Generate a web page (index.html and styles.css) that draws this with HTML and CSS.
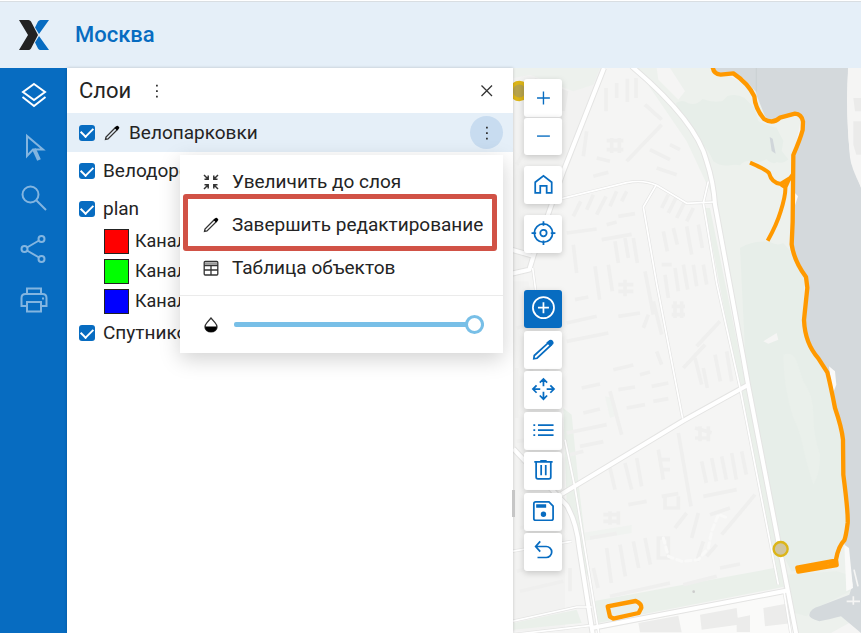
FILE: index.html
```html
<!DOCTYPE html>
<html lang="ru">
<head>
<meta charset="utf-8">
<meta name="viewport" content="width=device-width, initial-scale=1">
<title>Москва</title>
<link rel="stylesheet" href="styles.css">
</head>
<body>
<header class="topbar">
  <svg class="logo" viewBox="0 0 30 30" aria-hidden="true">
    <path fill="#222" d="M0 0h9.500q1.500 0 2.500 1.500L19 15l-7 13.500Q11 30 9.500 30H0l9-15z"/>
    <path fill="#076cc1" d="M30 0h-8.500q-1.500 0-2.500 1.500L16 7.500l4 6.500zM30 30h-8.500q-1.500 0-2.500-1.500L16 22.500l4-6.500z"/>
  </svg>
  <h1 class="title">Москва</h1>
</header>
<div class="workspace">
  <nav class="rail" aria-label="Инструменты">
    <button class="rail-btn active" aria-label="Слои"><svg viewBox="0 0 28 28"><path d="M14 2l11 8-11 8-11-8zM2.500 15L14 24l11.500-9"/></svg></button>
    <button class="rail-btn" aria-label="Выбор"><svg viewBox="0 0 28 28"><path d="M7 3v20l6-6.500h10z"/><path class="thick" d="M14 16l5 11"/></svg></button>
    <button class="rail-btn" aria-label="Поиск"><svg viewBox="0 0 28 28"><circle cx="10.500" cy="10.500" r="8"/><path d="M16.500 16.500L26 26"/></svg></button>
    <button class="rail-btn" aria-label="Поделиться"><svg viewBox="0 0 28 28"><circle cx="4.500" cy="14" r="3"/><circle cx="21.500" cy="4" r="3"/><circle cx="21.500" cy="24" r="3"/><path d="M7 12.500l12-7M7 15.500l12 7"/></svg></button>
    <button class="rail-btn" aria-label="Печать"><svg viewBox="0 0 28 28"><path d="M7 8V2.500h14V8M7 20H1.500v-8q0-4 4-4h17q4 0 4 4v8H21M7 16h14v9.500H7z"/><path d="M22 12.500h2"/></svg></button>
  </nav>
  <section class="panel">
    <div class="panel-head">
      <h2>Слои</h2>
      <button class="icon-btn" aria-label="Меню слоёв"><svg viewBox="0 0 20 20"><path class="dots" d="M9 3.700h1.800v1.800H9zM9 9.200h1.800v1.800H9zM9 14.700h1.800v1.800H9z"/></svg></button>
      <button class="icon-btn close" aria-label="Закрыть"><svg viewBox="0 0 20 20"><path class="line" d="M4.500 4.500l10.500 10.500M15 4.500L4.500 15"/></svg></button>
    </div>
    <ul class="layers">
      <li class="layer selected">
        <label><input type="checkbox" checked><svg class="pen" viewBox="0 0 16 16"><path class="line" d="M1.500 14.500l.500-2.500L11.500 2.500l2 2L4 14z"/><path d="M10.500 3l2-2q.800-.700 1.500 0l1 1q.700.700 0 1.500l-2 2z"/></svg>Велопарковки</label>
        <button class="more" aria-label="Действия" aria-expanded="true"><svg viewBox="0 0 20 20"><path class="dots" d="M9 3.700h1.800v1.800H9zM9 9.200h1.800v1.800H9zM9 14.700h1.800v1.800H9z"/></svg></button>
        <div class="menu">
          <button class="item"><svg viewBox="0 0 16 16"><path class="bold" d="M1 1l4 4M5.200 1.500v3.700H1.500M15 1l-4 4M10.800 1.500v3.700h3.700M1 15l4-4M5.200 14.500v-3.700H1.500M15 15l-4-4M10.800 14.500v-3.700h3.700"/></svg>Увеличить до слоя</button>
          <button class="item marked"><svg viewBox="0 0 16 16"><path class="line" d="M1.500 14.500l.500-2.500L11.500 2.500l2 2L4 14z"/><path d="M10.500 3l2-2q.800-.700 1.500 0l1 1q.700.700 0 1.500l-2 2z"/></svg>Завершить редактирование</button>
          <button class="item"><svg viewBox="0 0 16 16"><rect class="line" x="1.200" y="1.500" width="13.600" height="13.500" rx="1"/><path class="line" d="M1 5.500h14M1 10h14M8 5.500V15"/><path fill="#999" d="M2 2.500h12v2.300H2z"/></svg>Таблица объектов</button>
          <div class="opacity">
            <svg viewBox="0 0 16 16"><path class="line" d="M8 1L4 5.600q-2 2.300-2 4.300a6 5 0 0 0 12 0q0-2-2-4.300z"/><path d="M2 9.500h12a6 5.500 0 0 1-12 0z"/></svg>
            <input type="range" min="0" max="100" value="100" aria-label="Непрозрачность">
          </div>
        </div>
      </li>
      <li class="layer"><label><input type="checkbox" checked>Велодорожки</label></li>
      <li class="layer"><label><input type="checkbox" checked>plan</label></li>
      <li>
        <ul class="legend">
          <li><span class="swatch red"></span>Канал 1</li>
          <li><span class="swatch green"></span>Канал 2</li>
          <li><span class="swatch blue"></span>Канал 3</li>
        </ul>
      </li>
      <li class="layer"><label><input type="checkbox" checked>Спутниковый снимок</label></li>
    </ul>
    <span class="grip"></span>
  </section>
  <main class="map">
    <svg class="canvas" viewBox="9 0 1044 1695" preserveAspectRatio="xMinYMin slice" aria-hidden="true">
      <path fill="#f5f5f4" d="M0 0h1100v1700H0z"/>
      <path fill="#f2f2f1" d="M0 0h275L60 600 0 620zM0 640h55l110 460v590H0z"/>
      <!-- parks -->
      <path fill="#edf1ed" d="M10 0h260l-20 50-60 20L60 20 10 30zM380 0h230l120 60 50 100 95-20-25 130-5 280 40 90-8 120 40 90 70 130 40 430-20 120 30 70-10 60-110 60-20 25 20 30 75-10 40 50H865L700 870 610 390 530 220z"/>
      <path fill="#e7eee9" d="M498 105q20-12 35 0 25 10 45-12 30 12 60 6l15-15q25-8 50 5l30 30 12 40q30 15 55 20l20 40-5 30 20 25q-15 15-35 8-10 10-30-8-20 10-35 8-30-10-45 10-15-4-30 0-30 4-50-12-12-30-35-55-10-30-30-45-15-30-42-58z"/>
      <path fill="#e7eee9" d="M690 540q40-25 90-18 20 12 40 4 20 20 35 45l30 60-8 130q10 60 45 110l40 60 45 280 10 120-12 90-30 60-130 30-60-120-70-340z"/>
      <path fill="#e9efea" d="M830 1520l150-10 35 10 5 50-110 55-20 20-35-10z"/>
      <path fill="#eaf0eb" d="M820 860q30-10 40 20t20 60q30 40 30 100t20 120q0 60-20 90-20-60-30-110t-30-90q-30-90-30-190z"/>
      <path fill="#f0f3f0" d="M215 1395l150-24 0 24-145 24zM285 985l25 5 15 50-25 10z"/>
      <path fill="#eaf0ea" d="M250 1600l570-105 10 60-565 110zM10 1665l190-40 15 40-205 20zM160 1020l25 20 20 200 35 300-20-40-50-200zM585 420l15 0 85 420 130 660-22 0-125-640z"/>
      <path fill="#f5f5f4" d="M440 0h40l45 70-20 25-60-60zM760 820l40-25 5 20-30 12z"/>
      <!-- river and banks -->
      <path fill="#d4d9dc" d="M605 0H1015Q1005 120 1020 260L1053 360V1695L993 1645Q955 1655 928 1660 895 1650 898 1640 903 1620 928 1615L1018 1580 1028 1550 1008 1460 1003 1420 1013 1370 1000 1116 975 1020 952 910 925 870Q885 830 882 760L892 660 888 628Q852 580 845 530L848 460 850 260 880 180Q875 140 855 138L810 150Q790 170 765 145L741 85V75L700 30 660 14Q610 22 605 0z"/>
      <path fill="#f5f5f4" d="M1014 0h39v358q-30-60-33-90-12-120-6-268z"/>
      <path fill="#ebebea" d="M1030 90h23v40h-18zM1030 160h23v100h-14l-9-30z"/>
      <path fill="#fafaf9" d="M850 370l14 15-10 30zM957 895l18 15 4 40-12 30zM1003 1430l14 10 12 120-20 10z"/>
      <path fill="#fafaf9" d="M245 1690l590-115 20 125H245z"/>
      <path fill="#d0d6da" d="M779 207l9 5 9 45-12-8z"/>
      <path fill="none" stroke="#f5f5f4" stroke-width="5" d="M1010 1600h40M1030 1585v25M1032 1505l12 50"/>
      <path fill="none" stroke="#c5cbce" stroke-width="2" d="M739 0v80"/>
      <!-- buildings -->
      <g fill="none" stroke="#efefee" stroke-width="11">
        <path d="M288 60v70M320 45v45M352 32v70M378 30v60M290 218h50M290 245h50M305 210v45M328 210v45M230 190l-10 75M405 110l50 45M350 280l105-110M420 245l60 30M480 230l30 15M440 300l60 20M250 325l45-12M260 270l40 10"/>
        <path d="M190 445l22-45M230 425l20-45M260 440l28-55M300 415l20-45M335 400l15-30M455 420l20-40M475 435l25-50M500 450l25-50M530 460l20-40"/>
        <path d="M170 495l90-12M275 515l90-16M290 470l30-8M325 445l50-8M190 530l10 85M255 595l14 100M295 590l12 80M315 520l10 65M345 510l10 60M370 510l12 75M325 650h45M325 670h45M345 635v50M405 610l25 130"/>
        <path d="M460 490l12 60M490 480l12 50M530 475l15 85M565 470l12 70M455 590h30M465 620l10 70M495 600l10 70M520 590l13 75M550 590l10 65M580 590l10 60"/>
        <path d="M170 765l90-20M170 820l125-25M195 695l40-8M325 745l65-10M485 715h40M485 740h40M495 700v50M515 700v50M400 780l15-40M560 835l70-75M430 700l25 100"/>
        <path d="M215 960l55-12M220 1035l50-12M310 905l60-14M325 965l50-8M350 1020l55-10M300 970l35 130M390 920l30-8M425 955l50-10M430 1000l45-8M440 850l15 40M520 900l65-70M555 870l20 80M580 900l12 60M615 860l16 80M650 850l15 90"/>
        <path d="M170 1095l120-25M210 1135l70-14M180 1160l40-10M345 1185l20 80M380 1170l15 85M300 1200l15 65M445 1145l15 90M450 1175h30M450 1205h30M555 1080l50 14M555 1110h45M570 1075v45M595 1075v45"/>
        <path d="M505 1095l38 220M575 1180l14 65M605 1170l14 70M635 1165l14 70M665 1155l14 80M695 1150l14 70M580 1285l100-20M355 1310l55-10M455 1285l50-8M465 1285v35h40v-35M280 1340h50M280 1360h50M300 1330v40M325 1330v40M635 1400l100-120"/>
        <path d="M240 1410l80-14M250 1500l14 60M290 1440l14 105M330 1430l16 95M370 1420l16 80M405 1410l16 80M445 1410h30v60h-30zM495 1380l35-45M545 1410l20-75M600 1340l60-20M590 1465l30-35M560 1480l20-60M300 1585l180-40M520 1550l100-25M630 1500l60-12"/>
        <path d="M20 780l90-20M20 900v150M60 880l20 130M110 900v100M20 1120l110-15M30 1180l100-10M30 1380l100-20M20 1510l120-30M30 1570l130-30M180 1500v70M20 290l60-100M55 180l10 70M100 400l20-60"/>
      </g>
      <g fill="#ececeb"><path d="M75 30l100 40-10 60-110-20zM385 1665l120-22 10 50H390zM570 1640l110-20 5 50-110 15zM760 1620l80-15 10 60-85 10zM680 1650l40-8v50h-40z"/></g>
      <path fill="none" stroke="#f9f9f8" stroke-width="9" stroke-linejoin="round" stroke-linecap="round" stroke-dasharray="16 12" d="M460 1410l15 55 40 15 50-5 30-35 10-50 20-50 30 10"/>
      <!-- roads: casing first, surface on top -->
      <g fill="none" stroke-linejoin="round">
        <g stroke="#e4e4e3">
          <path stroke-width="18" d="M282 0L160 310 70 565 58 605 5 617M5 545l62 18M365-5Q560 160 590 280q20 60 25 130l85 460 15 85 145 750M155 1278l365-220 195-108M10 1142l160 170q30 50 38 130l40 255M245 1680l590-113"/>
          <path stroke-width="9" d="M155 392l195-48q50-10 90 8l90 54 80-4M438 352l-38 65 40 230 78 405M595 340l-15 65 40 240 70 315 115 590M165 1115l30 145 72 440M5 1660l195-43 45 0M5 1700l240-28M822 1570l20 125M68 600l12 90 25 80M5 1450l180-30"/>
        </g>
        <g stroke="#fff">
          <path stroke-width="12" d="M282 0L160 310 70 565 58 605 5 617M5 545l62 18M365-5Q560 160 590 280q20 60 25 130l85 460 15 85 145 750M155 1278l365-220 195-108M10 1142l160 170q30 50 38 130l40 255M245 1680l590-113"/>
          <path stroke-width="5" d="M155 392l195-48q50-10 90 8l90 54 80-4M438 352l-38 65 40 230 78 405M595 340l-15 65 40 240 70 315 115 590M165 1115l30 145 72 440M5 1660l195-43 45 0M5 1700l240-28M822 1570l20 125M68 600l12 90 25 80M5 1450l180-30"/>
        </g>
      </g>
      <!-- cycle paths -->
      <g fill="none" stroke="#ff9900" stroke-width="13" stroke-linejoin="round">
        <path d="M608-4q2 22 24 24l38-4q45 30 63 69 2 35 29 68 26 17 48-4l45-12q20 1 24 24l-1 25q-8 29-28 75l-2 200-3 68q7 50 43 98l4 32q-4 40-10 97 3 70 43 115l27 42q10 40 23 107 20 58 24 95l1 105q15 115 13 145-5 40-10 52-18 18-25 58l2 16-115 20-3-12 118-22"/>
        <path stroke-width="12" d="M720 284q45 19 57 31 8 30 35 33l36-23M812 348l14 10 10-22 12-16M826 355q2 25-14 75-12 40-39 88"/>
        <path d="M293 1615l84-16q18 8 17 20l-8 16-76 17-10-6z"/>
      </g>
      <!-- bicycle parkings -->
      <g stroke="#dcb518" stroke-width="7">
        <circle cx="28" cy="69" r="25" fill="#b7a34b" stroke-width="11"/>
        <circle cx="812" cy="1443" r="21" fill="#d0c5a0"/>
      </g>
      <circle cx="551" cy="1571" r="4" fill="#ccc"/>
    </svg>
    <div class="controls">
      <div class="zoom">
        <button aria-label="Приблизить"><svg viewBox="0 0 24 24"><path d="M12.500 5v14M5.500 12h14"/></svg></button>
        <button aria-label="Отдалить"><svg viewBox="0 0 24 24"><path d="M5.500 11h14"/></svg></button>
      </div>
      <button aria-label="Домой"><svg viewBox="0 0 24 24"><path d="M3.500 20.500V9L12.500 2l9 7v11.500H16V13H9v7.500z"/></svg></button>
      <button aria-label="Моё местоположение"><svg viewBox="0 0 24 24"><circle cx="12.500" cy="11" r="10"/><circle cx="12.500" cy="11" r="3.500"/><path d="M12.500-2v5M12.500 19v5M-.500 11h5M20.500 11h5"/></svg></button>
      <div class="edit">
        <button class="on" aria-label="Добавить"><svg viewBox="0 0 24 24"><circle cx="12.500" cy="10.500" r="11.500"/><path d="M12.500 4.500v12M6.500 10.500h12"/></svg></button>
        <button aria-label="Изменить"><svg viewBox="0 0 24 24"><path d="M2 21.500l.500-3.500L18.500 3.500l2.500 3L5.500 21z"/><path class="solid" d="M17 4l2.500-2q1.500-.500 2.500.500t.500 2.500L20 7z"/></svg></button>
        <button aria-label="Переместить"><svg viewBox="0 0 24 24"><path d="M12.500 0v8M12.500 14v8M1 11h8M16 11h8M8.500 4l4-4 4 4M8.500 18l4 4 4-4M5 7l-4 4 4 4M20 7l4 4-4 4"/></svg></button>
        <button aria-label="Список"><svg viewBox="0 0 24 24"><path d="M6.500 5.500h17M6.500 11h17M6.500 16.500h17M1.500 5.500h2M1.500 11h2M1.500 16.500h2"/></svg></button>
        <button aria-label="Удалить"><svg viewBox="0 0 24 24"><path d="M2.500 2h20M9 1h7M4.500 2v16.500q0 2 2 2h12q2 0 2-2V2M10 5.500v11M15 5.500v11"/></svg></button>
        <button aria-label="Сохранить"><svg viewBox="0 0 24 24"><path d="M4 1h14.500L23 5.500V19q0 2-2 2H4q-2 0-2-2V3q0-2 2-2z"/><path class="solid" d="M5.500 4.500h9v2h-9z"/><circle class="solid" cx="12.500" cy="14.500" r="2"/></svg></button>
        <button aria-label="Отменить"><svg viewBox="0 0 24 24"><path d="M9 .500L4 6l5 5.500M4 6h11.500a6 6 0 0 1 0 12H6"/></svg></button>
      </div>
    </div>
  </main>
</div>
</body>
</html>
```
FILE: styles.css
```css
* { box-sizing: border-box; }

html, body { height: 100%; }

body {
  margin: 0;
  display: flex;
  flex-direction: column;
  font: 19px/24px Roboto, sans-serif;
  color: #242424;
  overflow: hidden;
}

h1, h2, ul { margin: 0; padding: 0; }
ul { list-style: none; }

button {
  border: 0;
  padding: 0;
  background: none;
  font: inherit;
  color: inherit;
  display: flex;
  align-items: center;
  justify-content: center;
  cursor: pointer;
}

svg { display: block; flex: none; }
.line { fill: none; stroke: #333; stroke-width: 1.3; }
.bold { fill: none; stroke: #333; stroke-width: 1.5; }
.dots { fill: #333; }

.topbar {
  flex: none;
  height: 67px;
  margin-top: 1px;
  padding: 0 19px;
  border-top: 1px solid #d9dee2;
  background: #e5eff8;
  display: flex;
  align-items: center;
  gap: 26px;
}
.logo { width: 30px; height: 30px; }
.title { font-size: 22px; font-weight: 500; color: #076cc1; }

.workspace {
  flex: 1;
  min-height: 0;
  display: grid;
  grid-template-columns: 67px 446px 1fr;
}

.rail { background: #076cc1; padding-top: 2px; }
.rail-btn { width: 100%; height: 51px; }
.rail-btn svg {
  width: 28px;
  height: 28px;
  fill: none;
  stroke: #83b5e0;
  stroke-width: 2;
}
.rail-btn .thick { stroke-width: 4; }
.rail-btn.active svg { stroke: #fff; }

.panel {
  position: relative;
  z-index: 1;
  background: #fff;
  box-shadow: 0 0 3px rgba(0, 0, 0, .2);
}
.panel-head {
  height: 45px;
  padding: 0 16px 0 12px;
  display: flex;
  align-items: center;
  gap: 16px;
}
.panel-head h2 { font-size: 22px; font-weight: 400; }
.icon-btn { width: 20px; height: 20px; }
.icon-btn svg { width: 20px; height: 20px; }
.close { margin-left: auto; }

.layer {
  position: relative;
  height: 38px;
  padding: 0 10px 0 12px;
  display: flex;
  align-items: center;
  justify-content: space-between;
}
.layer label { display: flex; align-items: center; gap: 8px; }
.layer.selected { height: 39px; background: #e5eff8; }
.selected label { gap: 9px; }
.pen { width: 16px; height: 16px; }

input[type="checkbox"] {
  appearance: none;
  width: 16px;
  height: 16px;
  margin: 0;
  border-radius: 3px;
  background: #076cc1;
  display: grid;
  place-items: center;
}
input[type="checkbox"]:checked::after {
  content: "";
  width: 10px;
  height: 6px;
  margin-bottom: 3px;
  border: solid #fff;
  border-width: 0 0 2px 2px;
  transform: rotate(-45deg);
}

.more {
  width: 33px;
  height: 33px;
  border-radius: 50%;
  background: #c8dcf0;
}
.more svg { width: 20px; height: 20px; }

.legend { margin: -2px 0; padding-left: 37px; font-size: 18px; }
.legend li { height: 30px; display: flex; align-items: center; gap: 6px; }
.swatch { width: 25px; height: 25px; border: 1px solid #222; }
.red { background: #f00; }
.green { background: #0f0; }
.blue { background: #00f; }

.menu {
  position: absolute;
  z-index: 2;
  top: 42px;
  right: 10px;
  width: 323px;
  padding-top: 5px;
  background: #fff;
  box-shadow: 0 6px 20px rgba(0, 0, 0, .18);
}
.item {
  position: relative;
  width: 100%;
  height: 43px;
  padding-left: 23px;
  gap: 13px;
  justify-content: flex-start;
}
.item svg, .opacity svg { width: 16px; height: 16px; }
.marked::after {
  content: "";
  position: absolute;
  inset: -9px 6px -5px 3px;
  border: 5px solid #d15246;
  border-radius: 3px;
}
.opacity {
  height: 58px;
  margin-top: 6px;
  padding: 0 19px 0 23px;
  border-top: 1px solid #ebebeb;
  display: flex;
  align-items: center;
  gap: 15px;
}
input[type="range"] {
  appearance: none;
  flex: 1;
  min-width: 0;
  height: 20px;
  margin: 0;
  background: none;
}
input[type="range"]::-webkit-slider-runnable-track {
  height: 5px;
  border-radius: 2px;
  background: #78bfe7;
}
input[type="range"]::-webkit-slider-thumb {
  appearance: none;
  width: 19px;
  height: 19px;
  margin-top: -7px;
  border: 3px solid #78bfe7;
  border-radius: 50%;
  background: #fff;
}

.grip {
  position: absolute;
  right: -2px;
  top: 422px;
  width: 3px;
  height: 27px;
  background: #c6c6c6;
}

.map { position: relative; overflow: hidden; background: #f5f5f4; }
.canvas { width: 100%; height: 100%; }
.controls {
  position: absolute;
  top: 11px;
  left: 11px;
  display: flex;
  flex-direction: column;
  gap: 11px;
}
.controls button {
  width: 38px;
  height: 38px;
  border-radius: 3px;
  background: #fff;
  box-shadow: 0 2px 6px rgba(0, 0, 0, .18);
}
.controls svg {
  width: 22px;
  height: 22px;
  overflow: visible;
  fill: none;
  stroke: #076cc1;
  stroke-width: 1.9;
}
.controls .zoom svg { stroke-width: 1.5; }
.controls .solid { fill: #076cc1; }
.zoom button + button { border-top: 1px solid #d9d9d9; }
.edit {
  height: 281px;
  margin-top: 26px;
  display: flex;
  flex-direction: column;
  justify-content: space-between;
}
.controls .on { background: #076cc1; }
.controls .on svg { stroke: #fff; }
```
